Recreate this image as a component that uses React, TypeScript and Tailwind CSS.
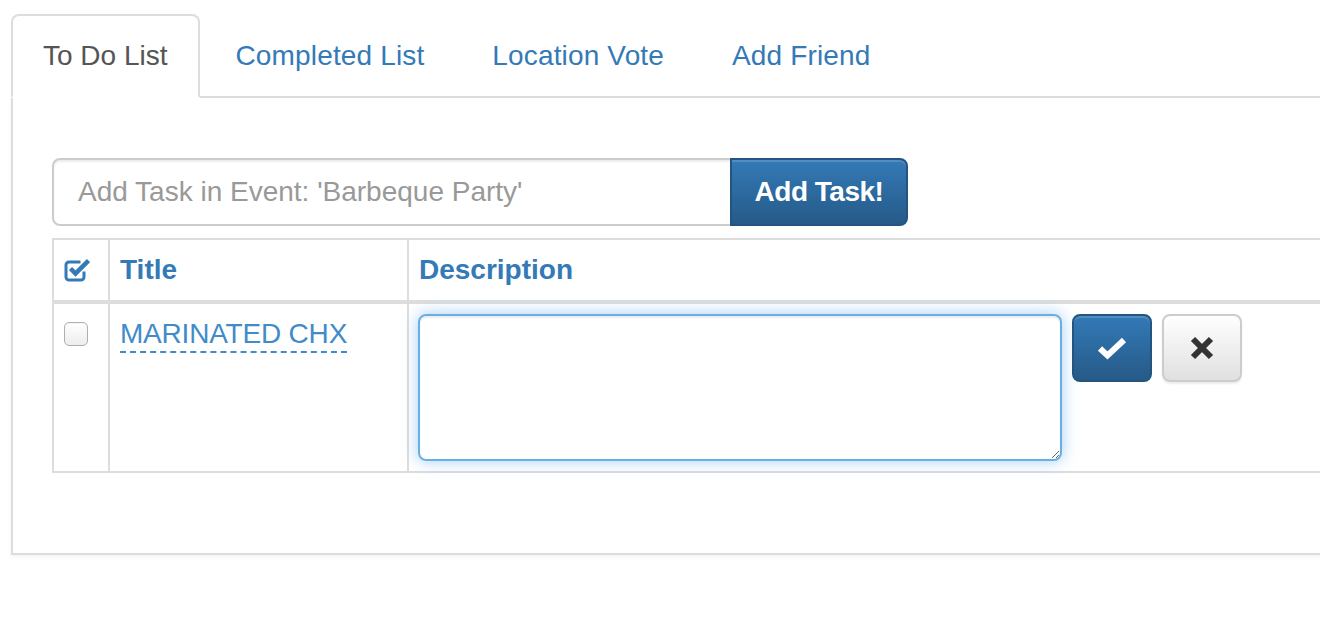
import { useState } from 'react';

const tabs = ['To Do List', 'Completed List', 'Location Vote', 'Add Friend'];

const HeaderCheck = () => (
  <svg width="26" height="26" viewBox="0 0 26 26" fill="none">
    <path d="M20 14.5v5.5a3 3 0 0 1-3 3H5a3 3 0 0 1-3-3V8a3 3 0 0 1 3-3h11.5" stroke="#337ab7" strokeWidth="3" />
    <path d="M6.5 11.5l5 5L24.5 3.5" stroke="#337ab7" strokeWidth="4.5" strokeLinejoin="miter" />
  </svg>
);

const OkIcon = () => (
  <svg width="30" height="24" viewBox="0 0 30 24" fill="none">
    <path d="M3 12.5l7.5 7L27 4" stroke="#fff" strokeWidth="6" strokeLinejoin="miter" />
  </svg>
);

const RemoveIcon = () => (
  <svg width="24" height="24" viewBox="0 0 24 24" fill="none">
    <path d="M3 3l18 18M21 3L3 21" stroke="#333" strokeWidth="6" />
  </svg>
);

export default function App() {
  const [active] = useState(0);

  return (
    <div className="h-[640px] w-[1320px] overflow-hidden bg-white pl-[11px] pt-[14px] font-['Liberation_Sans',Arial,sans-serif] text-[28px] leading-[40px]">
      <div className="w-[1400px]">
        {/* Tabs */}
        <ul className="flex border-b-2 border-[#ddd]">
          {tabs.map((t, i) => (
            <li key={t} className="-mb-[2px] mr-[4px]">
              <a
                className={
                  i === active
                    ? 'block rounded-t-[8px] border-2 border-[#ddd] border-b-transparent bg-white px-[30px] py-[20px] text-[#555]'
                    : 'block rounded-t-[8px] border-2 border-transparent px-[30px] py-[20px] tracking-[0.15px] text-[#337ab7]'
                }
              >
                {t}
              </a>
            </li>
          ))}
        </ul>

        {/* Tab content */}
        <div className="border-x-2 border-b-2 border-[#ddd] pb-[80px] pl-[39px] pt-[60px] shadow-[0_2px_4px_rgba(0,0,0,0.05)]">
          <div className="flex">
            <input
              className="h-[68px] w-[680px] rounded-l-[8px] border-2 border-[#ccc] px-[24px] text-[28px] text-[#555] shadow-[inset_0_2px_2px_rgba(0,0,0,0.075)] outline-none placeholder:text-[#999]"
              placeholder="Add Task in Event: 'Barbeque Party'"
            />
            <button className="-ml-[2px] h-[68px] w-[178px] rounded-r-[8px] border-2 border-[#245580] bg-gradient-to-b from-[#337ab7] to-[#265a88] text-[28px] font-bold tracking-[-0.5px] text-white shadow-[inset_0_2px_0_rgba(255,255,255,0.15)]">
              Add Task!
            </button>
          </div>

          {/* Table */}
          <div className="mt-[12px] border-y-2 border-l-2 border-[#ddd]">
            <div className="flex border-b-4 border-[#ddd]">
              <div className="flex w-[56px] items-center border-r-2 border-[#ddd] px-[10px] py-[10px]">
                <HeaderCheck />
              </div>
              <div className="w-[299px] border-r-2 border-[#ddd] px-[10px] py-[10px] font-bold text-[#337ab7]">Title</div>
              <div className="flex-1 px-[10px] py-[10px] font-bold text-[#337ab7]">Description</div>
            </div>
            <div className="flex">
              <div className="w-[56px] border-r-2 border-[#ddd] px-[10px] py-[10px]">
                <div className="mt-[8px] h-[24px] w-[24px] rounded-[5px] border border-[#b0b0b0] bg-gradient-to-b from-white to-[#ededed] shadow-[inset_0_1px_1px_rgba(0,0,0,0.05)]" />
              </div>
              <div className="w-[299px] border-r-2 border-[#ddd] px-[10px] py-[10px]">
                <span className="border-b-2 border-dashed border-[#428bca] pb-[2px] tracking-[-0.2px] text-[#428bca]">MARINATED CHX</span>
              </div>
              <div className="flex flex-1 items-start gap-[10px] py-[10px] pl-[9px]">
                <textarea className="h-[147px] w-[644px] rounded-[8px] border-2 border-[#66afe9] px-[20px] py-[10px] text-[28px] shadow-[inset_0_2px_2px_rgba(0,0,0,0.075),0_0_16px_rgba(102,175,233,0.6)] outline-none" />
                <button className="flex h-[68px] w-[80px] items-center justify-center rounded-[8px] border-2 border-[#245580] bg-gradient-to-b from-[#337ab7] to-[#265a88] shadow-[inset_0_2px_0_rgba(255,255,255,0.15)]">
                  <OkIcon />
                </button>
                <button className="flex h-[68px] w-[80px] items-center justify-center rounded-[8px] border-2 border-[#ccc] bg-gradient-to-b from-white to-[#e0e0e0] shadow-[0_2px_2px_rgba(0,0,0,0.075)]">
                  <RemoveIcon />
                </button>
              </div>
            </div>
          </div>
        </div>
      </div>
    </div>
  );
}
